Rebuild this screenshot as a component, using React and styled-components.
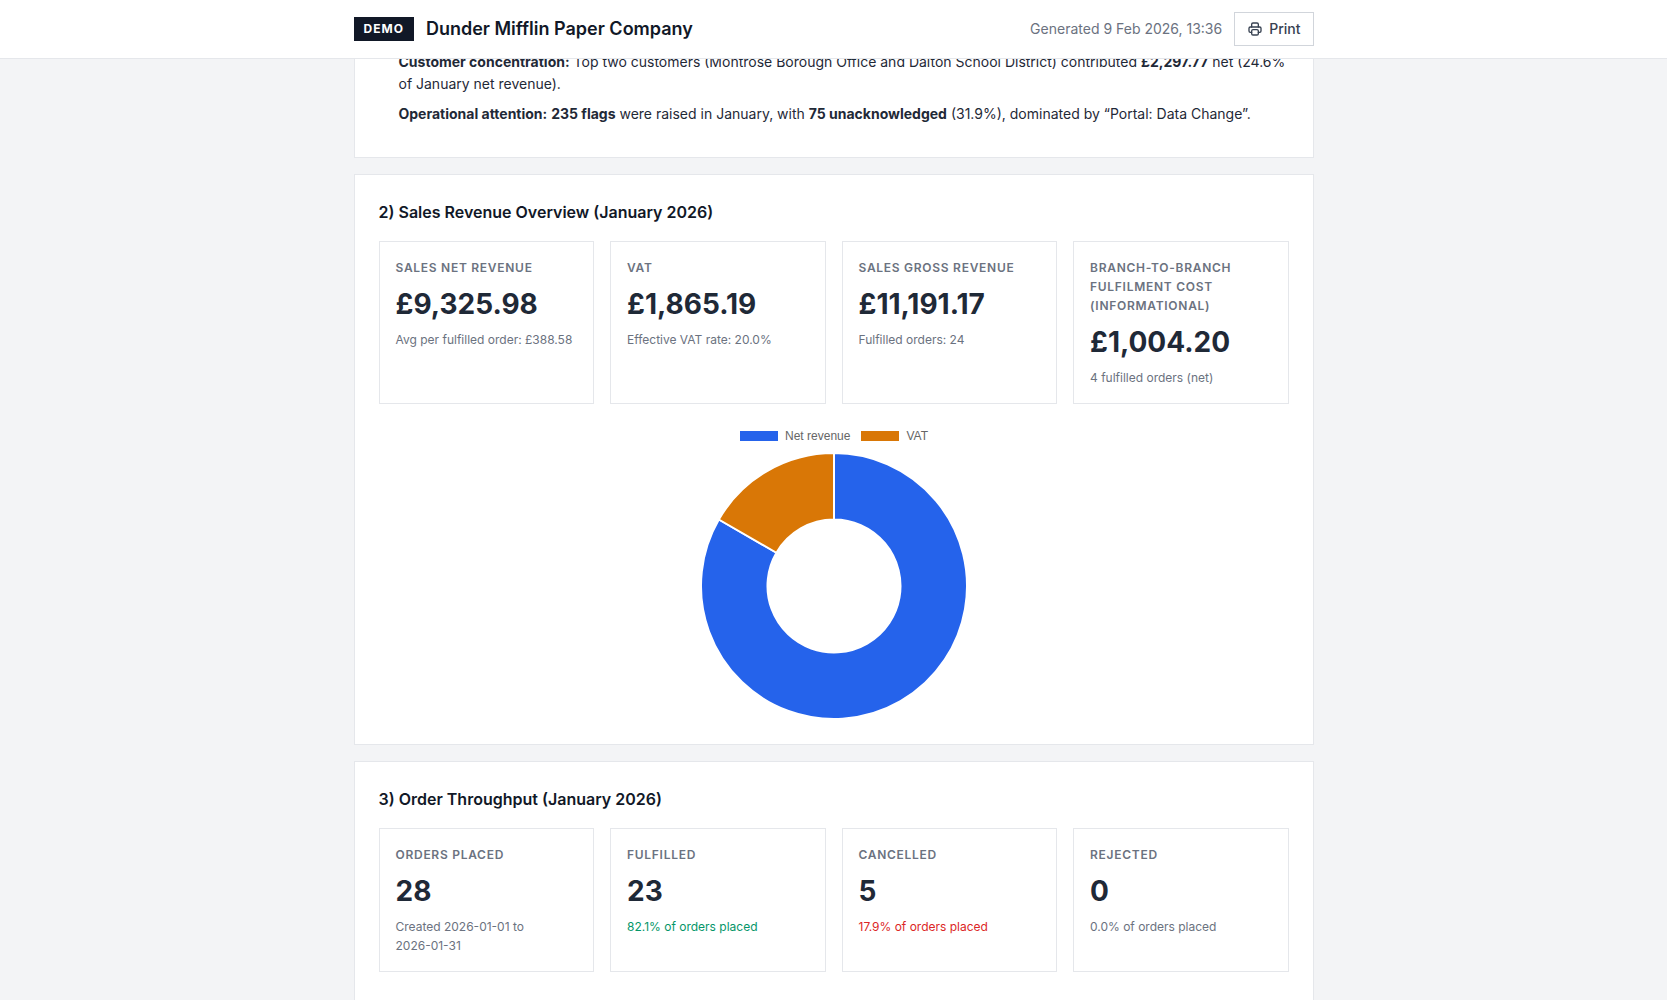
import React from "react";
import styled, { createGlobalStyle } from "styled-components";
import { TbPrinter } from "react-icons/tb";

const GlobalStyle = createGlobalStyle`
  * { box-sizing: border-box; }
  html { scrollbar-width: none; }
  body {
    margin: 0;
    background: #f3f4f6;
    color: #1f2937;
    font-family: Inter, "Liberation Sans", sans-serif;
    font-size: 14px;
    line-height: 22px;
    -webkit-font-smoothing: antialiased;
  }
`;

const Header = styled.header`
  position: sticky;
  top: 0;
  z-index: 10;
  background: #ffffff;
  border-bottom: 1px solid #e5e7eb;
`;

const HeaderInner = styled.div`
  max-width: 960px;
  margin: 0 auto;
  padding: 12px 0;
  display: flex;
  align-items: center;
  justify-content: space-between;
`;

const HeaderGroup = styled.div`
  display: flex;
  align-items: center;
  gap: 12px;
`;

const Badge = styled.span`
  padding: 3px 10px;
  background: #111827;
  color: #ffffff;
  font-size: 12px;
  font-weight: 700;
  line-height: 18px;
  letter-spacing: 1px;
`;

const Company = styled.h1`
  margin: 0;
  color: #111827;
  font-size: 18px;
  font-weight: 600;
  line-height: 30px;
`;

const Generated = styled.span`
  color: #6b7280;
`;

const PrintButton = styled.button`
  display: flex;
  align-items: center;
  gap: 6px;
  height: 34px;
  padding: 0 12px;
  background: #ffffff;
  border: 1px solid #d1d5db;
  color: #374151;
  font: inherit;
  font-weight: 500;
  cursor: pointer;
`;

const Main = styled.main`
  max-width: 960px;
  margin: -9px auto 0;
  display: flex;
  flex-direction: column;
  gap: 16px;
`;

const Section = styled.section`
  padding: ${(p) => (p.$top ?? 24)}px 24px ${(p) => (p.$bottom ?? 24)}px;
  background: #ffffff;
  border: 1px solid #e5e7eb;
`;

const Findings = styled.ul`
  margin: 0;
  padding: 0 0 0 20px;
  list-style: none;
`;

const Finding = styled.li`
  margin-bottom: 8px;
`;

const SectionTitle = styled.h2`
  margin: 0 0 16px;
  color: #111827;
  font-size: 16px;
  font-weight: 600;
  line-height: 26px;
`;

const StatGrid = styled.div`
  display: grid;
  grid-template-columns: repeat(4, 1fr);
  gap: 16px;
`;

const StatCard = styled.article`
  padding: 16px;
  border: 1px solid #e5e7eb;
`;

const StatLabel = styled.div`
  color: #6b7280;
  font-size: 12px;
  font-weight: 600;
  line-height: 19px;
  letter-spacing: 0.06em;
  text-transform: uppercase;
`;

const StatValue = styled.div`
  margin: 5px 0 3px;
  font-size: 28px;
  font-weight: 700;
  line-height: 45px;
`;

const tones = { muted: "#6b7280", good: "#059669", bad: "#dc2626" };

const StatNote = styled.div`
  color: ${(p) => tones[p.$tone]};
  font-size: 12px;
  line-height: 19px;
`;

const DateText = styled.time`
  white-space: nowrap;
`;

const Chart = styled.figure`
  margin: 16px 0 0;
  display: flex;
  flex-direction: column;
  align-items: center;
`;

const Legend = styled.figcaption`
  display: flex;
  align-items: center;
  gap: 10px;
  height: 32px;
`;

const LegendItem = styled.span`
  display: flex;
  align-items: center;
  gap: 7px;
  color: #666666;
  font-family: "Liberation Sans", Arial, sans-serif;
  font-size: 12px;
  line-height: 14px;
`;

const Swatch = styled.span`
  width: 38px;
  height: 10px;
  margin-left: 1px;
  background: ${(p) => p.$color};
`;

const slices = [
  { label: "Net revenue", value: 9325.98, color: "#2563eb" },
  { label: "VAT", value: 1865.19, color: "#d97706" },
];

const revenueStats = [
  { label: "Sales net revenue", value: "£9,325.98", note: "Avg per fulfilled order: £388.58" },
  { label: "VAT", value: "£1,865.19", note: "Effective VAT rate: 20.0%" },
  { label: "Sales gross revenue", value: "£11,191.17", note: "Fulfilled orders: 24" },
  {
    label: "Branch-to-branch fulfilment cost (informational)",
    value: "£1,004.20",
    note: "4 fulfilled orders (net)",
  },
];

const orderStats = [
  {
    label: "Orders placed",
    value: "28",
    note: (
      <>
        Created <DateText>2026-01-01</DateText> to <DateText>2026-01-31</DateText>
      </>
    ),
  },
  { label: "Fulfilled", value: "23", note: "82.1% of orders placed", tone: "good" },
  { label: "Cancelled", value: "5", note: "17.9% of orders placed", tone: "bad" },
  { label: "Rejected", value: "0", note: "0.0% of orders placed" },
];

function Stats({ items }) {
  return (
    <StatGrid>
      {items.map((item) => (
        <StatCard key={item.label}>
          <StatLabel>{item.label}</StatLabel>
          <StatValue>{item.value}</StatValue>
          <StatNote $tone={item.tone ?? "muted"}>{item.note}</StatNote>
        </StatCard>
      ))}
    </StatGrid>
  );
}

function ringSlice(center, outer, inner, from, to) {
  const point = (radius, turn) => {
    const angle = turn * 2 * Math.PI;
    return `${center + radius * Math.sin(angle)} ${center - radius * Math.cos(angle)}`;
  };
  const large = to - from > 0.5 ? 1 : 0;
  return [
    `M${point(outer, from)}`,
    `A${outer} ${outer} 0 ${large} 1 ${point(outer, to)}`,
    `L${point(inner, to)}`,
    `A${inner} ${inner} 0 ${large} 0 ${point(inner, from)}`,
    "Z",
  ].join(" ");
}

function Doughnut({ data }) {
  const total = data.reduce((sum, slice) => sum + slice.value, 0);
  let turn = 0;
  return (
    <svg width="268" height="268" viewBox="0 0 268 268" role="img" aria-label="Net revenue and VAT">
      {data.map((slice) => {
        const from = turn;
        turn += slice.value / total;
        return (
          <path
            key={slice.label}
            d={ringSlice(134, 133, 66.5, from, turn)}
            fill={slice.color}
            stroke="#ffffff"
            strokeWidth="2"
            strokeLinejoin="round"
          />
        );
      })}
    </svg>
  );
}

export default function App() {
  return (
    <>
      <GlobalStyle />
      <Header>
        <HeaderInner>
          <HeaderGroup>
            <Badge>DEMO</Badge>
            <Company>Dunder Mifflin Paper Company</Company>
          </HeaderGroup>
          <HeaderGroup>
            <Generated>Generated 9 Feb 2026, 13:36</Generated>
            <PrintButton type="button">
              <TbPrinter size={16} aria-hidden="true" />
              Print
            </PrintButton>
          </HeaderGroup>
        </HeaderInner>
      </Header>
      <Main>
        <Section $top={0}>
          <Findings>
            <Finding>
              <strong>Customer concentration:</strong> Top two customers (Montrose Borough Office and
              Dalton School District) contributed <strong>£2,297.77</strong> net (24.6% of January net
              revenue).
            </Finding>
            <Finding>
              <strong>Operational attention:</strong> <strong>235 flags</strong> were raised in January,
              with <strong>75 unacknowledged</strong> (31.9%), dominated by “Portal: Data Change”.
            </Finding>
          </Findings>
        </Section>
        <Section>
          <SectionTitle>2) Sales Revenue Overview (January 2026)</SectionTitle>
          <Stats items={revenueStats} />
          <Chart>
            <Legend>
              {slices.map((slice) => (
                <LegendItem key={slice.label}>
                  <Swatch $color={slice.color} />
                  {slice.label}
                </LegendItem>
              ))}
            </Legend>
            <Doughnut data={slices} />
          </Chart>
        </Section>
        <Section $bottom={48}>
          <SectionTitle>3) Order Throughput (January 2026)</SectionTitle>
          <Stats items={orderStats} />
        </Section>
      </Main>
    </>
  );
}
